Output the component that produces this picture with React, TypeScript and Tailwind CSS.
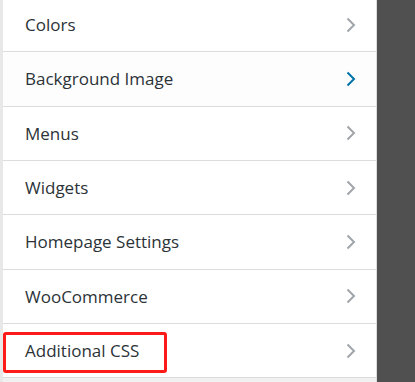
import React from 'react';

const sections = [
  { title: 'Colors' },
  { title: 'Background Image', active: true },
  { title: 'Menus' },
  { title: 'Widgets' },
  { title: 'Homepage Settings' },
  { title: 'WooCommerce' },
  { title: 'Additional CSS', marked: true },
];

const Chevron: React.FC<{ active?: boolean }> = ({ active }) => (
  <svg width="10" height="16" viewBox="0 0 10 16" fill="none">
    <path d="M1.5 1.5 L8 8 L1.5 14.5" stroke={active ? '#0073aa' : '#a0a5aa'} strokeWidth="2" />
  </svg>
);

const App: React.FC = () => {
  return (
    <div className="flex h-[382px] w-[415px] overflow-hidden bg-[#f1f1f1] font-['Open_Sans','Noto_Sans',sans-serif]">
      <div className="w-[3px] bg-[#e8e8e8]" />
      <div className="-mt-[2px] flex w-[373px] flex-col">
        {sections.map(s => (
          <div
            key={s.title}
            className={`relative flex h-[54.33px] shrink-0 items-center justify-between border-b border-[#dcdcde] pl-[22px] pr-[20px] ${s.active ? 'bg-[#fdfdfd]' : 'bg-white'}`}
          >
            <span className="text-[17px] text-[#2c3338]">{s.title}</span>
            <Chevron active={s.active} />
            {s.marked && (
              <div className="absolute left-0 top-[8px] h-[41px] w-[164px] rounded-[3px] border-[3px] border-[#ff1a1a]" />
            )}
          </div>
        ))}
      </div>
      <div className="w-px bg-[#ddd]" />
      <div className="flex-1 bg-[#505050]" />
    </div>
  );
};

export default App;
